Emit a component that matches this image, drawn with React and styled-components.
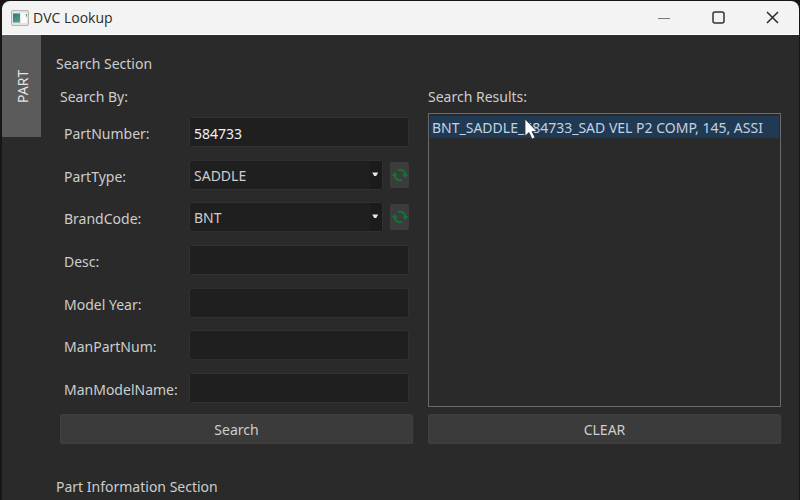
import { useState } from "react";
import styled, { createGlobalStyle } from "styled-components";

const GlobalStyle = createGlobalStyle`
  * {
    box-sizing: border-box;
  }

  body {
    margin: 0;
    background: #161616;
    color: #cdcdcd;
    font-family: "Noto Sans", "Open Sans", sans-serif;
    font-size: 14px;
    line-height: 20px;
  }

  button, input, select {
    font: inherit;
    color: inherit;
    margin: 0;
  }
`;

const Window = styled.div`
  display: flex;
  flex-direction: column;
  min-height: 100vh;
  padding: 1px 1px 0 2px;
`;

const TitleBar = styled.header`
  display: flex;
  align-items: center;
  height: 34px;
  padding-left: 9px;
  background: #f3f3f3;
  border-bottom: 1px solid #fff;
  border-radius: 8px 8px 0 0;
  color: #2b2b2b;
`;

const Title = styled.h1`
  flex: 1;
  margin: 0 0 0 4px;
  font-family: "Open Sans", sans-serif;
  font-size: 14px;
  font-weight: 400;
`;

const WindowButton = styled.button`
  display: flex;
  align-items: center;
  justify-content: center;
  width: 54px;
  height: 32px;
  padding: 0;
  border: none;
  background: none;
`;

const Body = styled.div`
  display: flex;
  flex: 1;
  background: #2a2a2a;
`;

const TabStrip = styled.nav`
  flex: none;
  width: 39px;
`;

const Tab = styled.button`
  width: 100%;
  height: 102px;
  padding: 0 3px 0 0;
  border: none;
  background: #5b5b5b;
  color: #e4e4e4;
  writing-mode: vertical-rl;
  transform: rotate(180deg);
`;

const Panel = styled.main`
  flex: 1;
  min-width: 0;
  padding: 19px 18px 0 15px;
`;

const SectionTitle = styled.h2`
  margin: 0;
  font-size: 14px;
  font-weight: 400;
`;

const Columns = styled.div`
  display: grid;
  grid-template-columns: minmax(0, 1fr) minmax(0, 1fr);
  column-gap: 15px;
  margin: 13px 0 33px 4px;
`;

const Column = styled.section`
  display: flex;
  flex-direction: column;
`;

const ColumnTitle = styled.h3`
  margin: 0 0 6px;
  font-size: 14px;
  font-weight: 400;
`;

const Fields = styled.div`
  display: flex;
  flex: 1;
  flex-direction: column;
  justify-content: space-between;
  padding: 4px;
`;

const Row = styled.div`
  display: flex;
  align-items: center;
`;

const Label = styled.label`
  flex: none;
  width: 125px;
  padding-top: 4px;
  white-space: nowrap;
`;

const TextInput = styled.input`
  flex: 1;
  min-width: 0;
  height: 30px;
  padding: 2px 4px 0;
  border: 1px solid #303030;
  border-radius: 2px;
  background: #1f1f1f;
  color: #f0f0f0;
  outline: none;
`;

const SelectWrap = styled.div`
  position: relative;
  flex: 1;
  min-width: 0;
  margin-right: 7px;
`;

const Select = styled.select`
  display: block;
  appearance: none;
  width: 100%;
  height: 30px;
  padding: 2px 16px 0 4px;
  border: 1px solid #303030;
  border-radius: 2px;
  background: #1f1f1f;
  outline: none;
`;

const Arrow = styled.svg`
  position: absolute;
  top: 1px;
  right: 1px;
  pointer-events: none;
`;

const RefreshButton = styled.button`
  display: flex;
  align-items: center;
  justify-content: center;
  width: 19px;
  height: 26px;
  padding: 0;
  border: none;
  border-radius: 2px;
  background: #3c3c3c;
`;

const Results = styled.ul`
  flex: 1;
  min-height: 294px;
  margin: 0;
  padding: 2px 1px;
  border: 1px solid #6a6a6a;
  list-style: none;
`;

const Result = styled.li`
  height: 22px;
  padding: 0 2px;
  overflow: hidden;
  background: ${(p) => (p["aria-selected"] ? "#213a54" : "transparent")};
  color: #c3d2e0;
  line-height: 22px;
  padding-top: 1px;
  white-space: nowrap;
  cursor: default;
`;

const ActionButton = styled.button`
  height: 30px;
  margin-top: 7px;
  padding: 2px 0 0;
  border: 1px solid #404040;
  border-radius: 2px;
  background: #3b3b3b;
`;

const Pointer = styled.svg`
  position: absolute;
  top: 118px;
  left: 523px;
  pointer-events: none;
`;

const AppIcon = () => (
  <svg width="18" height="16" viewBox="0 0 18 16" aria-hidden="true">
    <defs>
      <linearGradient id="screen" x1="0" y1="0" x2="0.6" y2="1">
        <stop offset="0" stopColor="#2f6f96" />
        <stop offset="1" stopColor="#4fa37c" />
      </linearGradient>
    </defs>
    <rect x="0.5" y="0.5" width="17" height="15" rx="1.5" fill="#e4e4e4" stroke="#b4b4b4" />
    <rect x="2" y="3.500" width="7" height="9" fill="url(#screen)" />
    <rect x="10" y="3" width="6" height="10" fill="#fafafa" />
    <path d="M14.500 4H16v4z" fill="#56a07f" />
  </svg>
);

const RefreshIcon = () => (
  <svg width="18" height="16" viewBox="0 0 18 16" aria-hidden="true">
    <g fill="none" stroke="#0d7a36" strokeWidth="1.8">
      <path d="M7 3.2C10.500 1.500 14.200 4 14.400 8" />
      <path d="M11 12.800C7.500 14.500 3.800 12 3.600 8" />
    </g>
    <path d="M11.300 7.300h6L14.500 10.800z" fill="#0d7a36" />
    <path d="M0.700 8.700h6L3.500 5.200z" fill="#0d7a36" />
  </svg>
);

const fields = [
  { id: "partNumber", label: "PartNumber:", value: "584733" },
  { id: "partType", label: "PartType:", options: ["SADDLE"] },
  { id: "brandCode", label: "BrandCode:", options: ["BNT"] },
  { id: "desc", label: "Desc:", value: "" },
  { id: "modelYear", label: "Model Year:", value: "" },
  { id: "manPartNum", label: "ManPartNum:", value: "" },
  { id: "manModelName", label: "ManModelName:", value: "" },
];

function Field({ id, label, value, options }) {
  return (
    <Row>
      <Label htmlFor={id}>{label}</Label>
      {options ? (
        <>
          <SelectWrap>
            <Select id={id}>
              {options.map((o) => (
                <option key={o}>{o}</option>
              ))}
            </Select>
            <Arrow width="12" height="28" viewBox="0 0 12 28" aria-hidden="true">
              <rect width="12" height="28" fill="#1b1b1b" />
              <path d="M2.200 11.500h6L6.200 15h-2z" fill="#e8e8e8" />
            </Arrow>
          </SelectWrap>
          <RefreshButton type="button" aria-label={`Refresh ${id}`}>
            <RefreshIcon />
          </RefreshButton>
        </>
      ) : (
        <TextInput id={id} type="text" defaultValue={value} />
      )}
    </Row>
  );
}

export default function App() {
  const [results, setResults] = useState([
    "BNT_SADDLE_584733_SAD VEL P2 COMP, 145, ASSI",
  ]);

  return (
    <Window>
      <GlobalStyle />

      <TitleBar>
        <AppIcon />
        <Title>DVC Lookup</Title>
        <WindowButton aria-label="Minimize">
          <svg width="12" height="12" viewBox="0 0 12 12">
            <path d="M0 6.500h12" stroke="#777" />
          </svg>
        </WindowButton>
        <WindowButton aria-label="Maximize">
          <svg width="13" height="13" viewBox="0 0 13 13">
            <rect x="1" y="1" width="11" height="11" rx="2" fill="none" stroke="#333" strokeWidth="1.500" />
          </svg>
        </WindowButton>
        <WindowButton aria-label="Close">
          <svg width="13" height="13" viewBox="0 0 13 13">
            <path d="M1 1l11 11M12 1L1 12" stroke="#2b2b2b" strokeWidth="1.500" />
          </svg>
        </WindowButton>
      </TitleBar>

      <Body>
        <TabStrip>
          <Tab type="button">PART</Tab>
        </TabStrip>

        <Panel>
          <SectionTitle>Search Section</SectionTitle>

          <Columns>
            <Column>
              <ColumnTitle>Search By:</ColumnTitle>
              <Fields>
                {fields.map((f) => (
                  <Field key={f.id} {...f} />
                ))}
              </Fields>
              <ActionButton type="button">Search</ActionButton>
            </Column>

            <Column>
              <ColumnTitle>Search Results:</ColumnTitle>
              <Results role="listbox" aria-label="Search Results">
                {results.map((r) => (
                  <Result key={r} role="option" aria-selected={true}>
                    {r}
                  </Result>
                ))}
              </Results>
              <ActionButton type="button" onClick={() => setResults([])}>
                CLEAR
              </ActionButton>
            </Column>
          </Columns>

          <SectionTitle>Part Information Section</SectionTitle>
        </Panel>
      </Body>

      <Pointer width="15" height="23" viewBox="0 0 15 23" aria-hidden="true">
        <path
          d="M2 1v17l4-3.500 3 6.500 3-1.500-3-6h5z"
          fill="#fff"
          stroke="#333"
          strokeWidth="0.800"
        />
      </Pointer>
    </Window>
  );
}
